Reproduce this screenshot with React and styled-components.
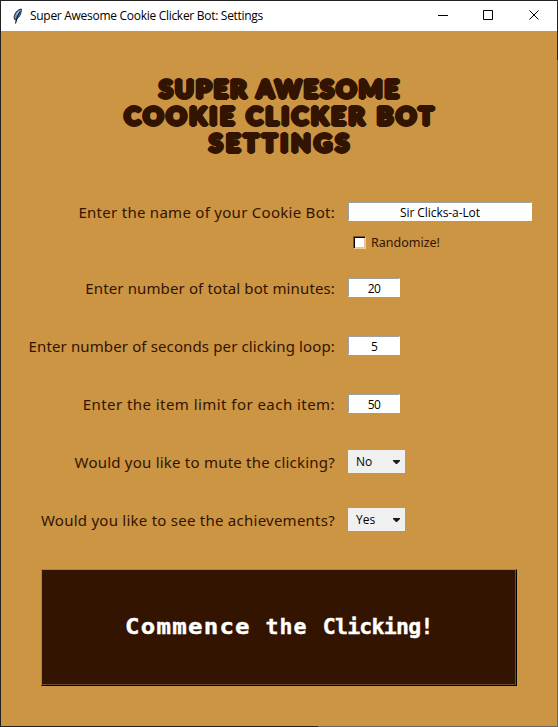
import React from 'react';
import styled, { createGlobalStyle } from 'styled-components';

const ink = '#331400';
const caramel = '#cb9544';

const GlobalStyle = createGlobalStyle`
  * { box-sizing: border-box; }
  body { margin: 0; overflow: hidden; }
`;

const Window = styled.div`
  width: 558px;
  height: 727px;
  padding: 1px;
  display: flex;
  flex-direction: column;
  background:
    linear-gradient(#222, #222) 100% 0 / 1px 60px no-repeat,
    linear-gradient(#666, #666) 100% 0 / 1px 100% no-repeat,
    linear-gradient(#222, #222) 0 100% / 318px 1px no-repeat,
    linear-gradient(#666, #666) 0 100% / 100% 1px no-repeat,
    #222;
  font-family: 'Noto Sans', sans-serif;
`;

const TitleBar = styled.header`
  height: 30px;
  flex: none;
  display: flex;
  align-items: center;
  padding-left: 11px;
  background: #fff;
`;

const Caption = styled.h1`
  flex: 1;
  margin: 0 0 0 8px;
  font: 400 12px/16px 'Open Sans', sans-serif;
  letter-spacing: -0.29px;
  color: #000;
  white-space: nowrap;
`;

const WindowButton = styled.button`
  width: 46px;
  height: 30px;
  padding: 0 0 2px;
  border: 0;
  background: none;
  display: flex;
  align-items: center;
  justify-content: center;

  svg { overflow: visible; }
`;

const Body = styled.main`
  flex: 1;
  display: flex;
  flex-direction: column;
  background: ${caramel};
`;

const Heading = styled.h2`
  margin: 44px 0 0;
  height: 82px;
  display: flex;
  flex-direction: column;
  align-items: center;
  color: ${ink};
  font: 900 25px/27px Lato, sans-serif;
  text-shadow:
    2px 0 ${ink}, -2px 0 ${ink}, 0 2px ${ink}, 0 -2px ${ink},
    1.4px 1.4px ${ink}, -1.4px 1.4px ${ink}, 1.4px -1.4px ${ink}, -1.4px -1.4px ${ink};
`;

const HeadingLine = styled.span`
  white-space: nowrap;
  letter-spacing: ${(p) => p.$tracking}px;
  margin-right: -${(p) => p.$tracking}px;
  word-spacing: 0.5px;
`;

const Form = styled.form`
  margin-top: 32px;
  display: flex;
  flex-direction: column;
`;

const Row = styled.div`
  height: ${(p) => p.$height || 58}px;
  margin-bottom: ${(p) => p.$gap || 0}px;
  display: grid;
  grid-template-columns: 334px auto;
  column-gap: 13px;
  align-items: center;
  justify-content: start;
`;

const Label = styled.label`
  justify-self: end;
  color: ${ink};
  font-size: 15px;
  line-height: 20px;
  white-space: nowrap;
  letter-spacing: ${(p) => p.$tracking}px;
`;

const Entry = styled.input`
  width: ${(p) => p.$width}px;
  height: 19px;
  margin: 0 0 1px;
  padding: 1px 0 0;
  border: 1px solid;
  border-color: #a0a0a0 #fff #fff #a0a0a0;
  border-radius: 0;
  background: #fff;
  color: #000;
  text-align: center;
  font: 400 12px/16px 'Open Sans', sans-serif;
  letter-spacing: ${(p) => p.$tracking}px;
  outline: none;
`;

const CheckRow = styled.label`
  display: flex;
  align-items: center;
  gap: 5px;
  padding-left: 5px;
  color: ${ink};
  font-size: 12.5px;
  line-height: 15px;
`;

const CheckBox = styled.span`
  width: 13px;
  height: 13px;
  border: 1px solid;
  border-color: #7a592a #f3c98c #f3c98c #7a592a;
  background: #fff;
  box-shadow: inset 1px 1px #000, inset -1px -1px #e4c396;
`;

const Dropdown = styled.button`
  width: 57px;
  height: 23px;
  margin: 0 0 1px;
  padding: 1px 4px 0 8px;
  border: 0;
  background: #f0f0f0;
  color: #000;
  display: flex;
  align-items: center;
  justify-content: space-between;
  font: 400 12px/16px 'Open Sans', sans-serif;
`;

const Commence = styled.button`
  width: 476px;
  height: 117px;
  margin: 20px 0 0 40px;
  padding: 0 0 2px;
  display: flex;
  align-items: center;
  justify-content: center;
  border: 1px solid;
  border-color: #998072 #000 #000 #998072;
  border-radius: 0;
  background: ${ink};
  box-shadow: inset -1px -1px #684b3b;
  color: #fff;
  font: 700 21.5px/28px 'DejaVu Sans Mono', monospace;
  -webkit-text-stroke: 0.4px #fff;
  white-space: pre;
`;

const Word = styled.span`
  letter-spacing: ${(p) => p.$tracking}px;
  transform: scaleX(${(p) => p.$stretch || 1});
  transform-origin: 0 50%;
  margin-right: ${(p) => p.$gap || 0}px;
`;

const Feather = () => (
  <svg width="10" height="17" viewBox="0 0 10 17">
    <path d="M9.300 1C6.500 1.200 3.500 4 2.500 7.200c-.6 1.900-.4 3.600.6 4.800C5.800 10.800 8 8 8.800 5.200 9.300 3.500 9.500 2 9.300 1Z" fill="#5c93d0" stroke="#1b2736" />
    <path d="M7.800 3.500C6 6.500 4.600 10 3.500 15.500" fill="none" stroke="#10151d" strokeWidth="1.200" />
    <path d="M7.300 2.800 4.700 6.800" stroke="#b9dcfa" strokeWidth=".9" />
  </svg>
);

const Arrow = () => (
  <svg width="9" height="5" viewBox="0 0 9 5">
    <path d="M1 0h7v1L5 4H4L1 1Z" fill="#1c1c1c" />
  </svg>
);

const glyphs = {
  Minimize: 'M1 5.500h10',
  Maximize: 'M.5 .5h9v9h-9Z',
  Close: 'M.5 .5l9 9M9.500 .5l-9 9',
};

const fields = [
  { label: 'Enter number of total bot minutes:', value: '20', tracking: 0.13 },
  { label: 'Enter number of seconds per clicking loop:', value: '5', tracking: 0.13 },
  { label: 'Enter the item limit for each item:', value: '50', tracking: 0.45 },
];

const choices = [
  { label: 'Would you like to mute the clicking?', value: 'No', tracking: 0.22 },
  { label: 'Would you like to see the achievements?', value: 'Yes', tracking: 0.25 },
];

export default function App() {
  return (
    <Window>
      <GlobalStyle />
      <TitleBar>
        <Feather />
        <Caption>Super Awesome Cookie Clicker Bot: Settings</Caption>
        {Object.entries(glyphs).map(([name, d]) => (
          <WindowButton key={name} aria-label={name}>
            <svg width="10" height="10" viewBox="0 0 10 10">
              <path d={d} fill="none" stroke="#000" />
            </svg>
          </WindowButton>
        ))}
      </TitleBar>
      <Body>
        <Heading>
          <HeadingLine $tracking={2.2}>SUPER AWESOME</HeadingLine>
          <HeadingLine $tracking={2.8}>COOKIE CLICKER BOT</HeadingLine>
          <HeadingLine $tracking={3.3}>SETTINGS</HeadingLine>
        </Heading>
        <Form onSubmit={(e) => e.preventDefault()}>
          <Row $height={46}>
            <Label $tracking={0.28}>Enter the name of your Cookie Bot:</Label>
            <Entry $width={184} $tracking={-0.08} defaultValue="Sir Clicks-a-Lot" />
          </Row>
          <Row $height={15} $gap={9}>
            <span />
            <CheckRow>
              <CheckBox />
              Randomize!
            </CheckRow>
          </Row>
          {fields.map((f) => (
            <Row key={f.label}>
              <Label $tracking={f.tracking}>{f.label}</Label>
              <Entry $width={52} $tracking={-0.7} defaultValue={f.value} />
            </Row>
          ))}
          {choices.map((c) => (
            <Row key={c.label}>
              <Label $tracking={c.tracking}>{c.label}</Label>
              <Dropdown type="button">
                {c.value}
                <Arrow />
              </Dropdown>
            </Row>
          ))}
          <Commence>
            <Word $tracking={1.1} $stretch={1.12} $gap={28}>Commence</Word>
            <Word $tracking={1.1} $gap={15}>the</Word>
            <Word $tracking={-0.7}>Clicking!</Word>
          </Commence>
        </Form>
      </Body>
    </Window>
  );
}
